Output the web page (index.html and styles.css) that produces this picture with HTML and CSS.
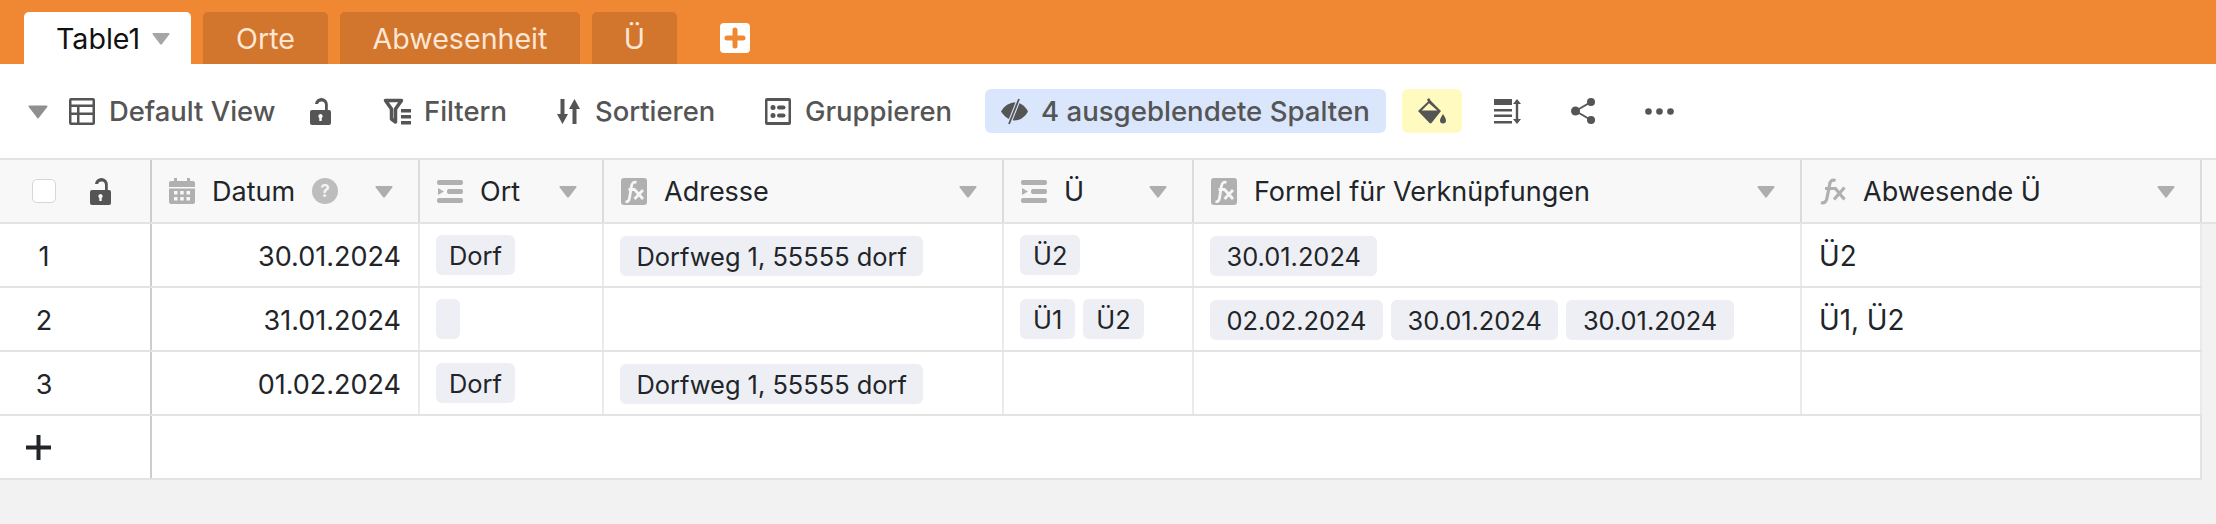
FILE: index.html
```html
<!DOCTYPE html>
<html lang="de">
<head>
<meta charset="utf-8">
<title>Table1</title>
<link rel="stylesheet" href="styles.css">
</head>
<body>
<svg class="defs" width="0" height="0" aria-hidden="true">
  <defs>
    <symbol id="tri" viewBox="0 0 18 13"><path d="M1.5 1h15a1 1 0 0 1 .8 1.5L10 12a1.2 1.2 0 0 1-2 0L.7 2.5A1 1 0 0 1 1.5 1z"/></symbol>
    <symbol id="lock" viewBox="0 0 21 27"><path fill-rule="evenodd" d="M2 12h13V7a3.6 3.6 0 0 0-7 -1H5a6.4 6.4 0 0 1 12.800 1v5H19a2 2 0 0 1 2 2v11a2 2 0 0 1-2 2H2a2 2 0 0 1-2-2V14a2 2 0 0 1 2-2zM10.500 16a2.200 2.200 0 0 0-1.200 4v3h2.400v-3a2.200 2.200 0 0 0-1.200-4z"/></symbol>
    <symbol id="link" viewBox="0 0 26 23"><path d="M2 0h22a2 2 0 0 1 2 2v1a2 2 0 0 1-2 2H2a2 2 0 0 1-2-2V2a2 2 0 0 1 2-2zM2 18h22a2 2 0 0 1 2 2v1a2 2 0 0 1-2 2H2a2 2 0 0 1-2-2v-1a2 2 0 0 1 2-2zM12 9h12a2 2 0 0 1 2 2v1a2 2 0 0 1-2 2H12a2 2 0 0 1-2-2v-1a2 2 0 0 1 2-2zM1 8l6 3.500L1 15z"/></symbol>
    <symbol id="fx" viewBox="0 0 26 27"><rect width="26" height="27" rx="3" fill="#b0b0b0"/><path d="M15.500 4.500C12.500 3.500 11 5 10.500 8L8.500 20C8 23 6.500 24 4.500 23.500M7.500 11.500h7M14 12l8 9M22 12l-8.500 9" fill="none" stroke="#f6f6f6" stroke-width="2.800"/></symbol>
  </defs>
</svg>

<div class="app">
  <nav class="tabs">
    <div class="tab tab-active">Table1<svg class="tab-tri"><use href="#tri"/></svg></div>
    <div class="tab tab-orte">Orte</div>
    <div class="tab tab-abw">Abwesenheit</div>
    <div class="tab tab-ue">Ü</div>
    <div class="tab-add"><svg viewBox="0 0 30 30" width="30" height="30"><rect width="30" height="30" rx="4" fill="#fff"/><path d="M15 7v16M7 15h16" stroke="#f08733" stroke-width="5" stroke-linecap="round"/></svg></div>
  </nav>

  <div class="toolbar">
    <svg class="tb-tri"><use href="#tri"/></svg>
    <svg class="ico ico-view" viewBox="0 0 26 27"><path fill-rule="evenodd" d="M2 0h22a2 2 0 0 1 2 2v23a2 2 0 0 1-2 2H2a2 2 0 0 1-2-2V2a2 2 0 0 1 2-2zM2.500 2.500v4h21v-4zM2.500 9v5.500h5.500V9zm8 0v5.500h13V9zM2.500 17v7.500h5.500V17zm8 0v7.500h13V17z"/></svg>
    <span class="tb-label tb-view">Default View</span>
    <svg class="ico ico-lock"><use href="#lock"/></svg>
    <svg class="ico ico-filter" viewBox="0 0 28 27"><path fill="none" stroke="currentColor" stroke-width="3.500" stroke-linejoin="round" d="M2.500 2.500h16l-6 8.500v13l-4-3V11z"/><path d="M18 11h10v3.500H18zM18 17h10v3.500H18zM18 23h10v3.500H18z"/></svg>
    <span class="tb-label tb-filter">Filtern</span>
    <svg class="ico ico-sort" viewBox="0 0 23 27"><path d="M3.500 1h4v15H11L5.500 26 0 16h3.500zM15.500 26h4V11H23L17.500 1 12 11h3.500z"/></svg>
    <span class="tb-label tb-sort">Sortieren</span>
    <svg class="ico ico-group" viewBox="0 0 26 27"><path fill-rule="evenodd" d="M2 0h22a2 2 0 0 1 2 2v23a2 2 0 0 1-2 2H2a2 2 0 0 1-2-2V2a2 2 0 0 1 2-2zm.500 3v21h21V3z"/><circle cx="8" cy="9.500" r="2.500"/><circle cx="8" cy="17.500" r="2.500"/><rect x="12" y="7.500" width="8.500" height="4" rx="2"/><rect x="12" y="15.500" width="8.500" height="4" rx="2"/></svg>
    <span class="tb-label tb-group">Gruppieren</span>
    <div class="pill pill-hidden">
      <svg class="ico ico-eye" viewBox="0 0 27 27"><path d="M0 13.500C4 7 9 4.500 14 4.500 20 4.500 24 8 27 13.500 24 19 19 22.500 13.500 22.500 8 22.500 4 19 0 13.500z"/><path d="M8 26 18 1" stroke="#dae6fb" stroke-width="4"/><path d="M8 26 18 1" stroke="currentColor" stroke-width="1.800"/></svg>
      <span class="tb-label tb-hidden">4 ausgeblendete Spalten</span>
    </div>
    <div class="pill pill-paint">
      <svg class="ico ico-paint" viewBox="0 0 28 27"><path fill-rule="evenodd" d="M11 0l2 3 10 10-9.500 12a1.500 1.500 0 0 1-2 0L0 13 10 3.500 9 1.500zM11 5.200 3.800 12.500h15.500z"/><path d="M25 16c1.500 2.500 3 4.500 3 6.500a3 3 0 0 1-6 0c0-2 1.500-4 3-6.500z"/></svg>
    </div>
    <svg class="ico ico-height" viewBox="0 0 27 25"><path d="M0 0h18v6H0zM0 10h18v2.400H0zM0 15.500h18v2.400H0zM0 22h18v2.400H0zM23 0l4 5h-2.800v15H27l-4 5-4-5h2.800V5H19z"/></svg>
    <svg class="ico ico-share" viewBox="0 0 25 26"><circle cx="4.500" cy="13" r="4.500"/><circle cx="20" cy="4" r="4"/><circle cx="20" cy="22" r="4"/><path d="M4.500 13 20 4M4.500 13 20 22" stroke="currentColor" stroke-width="2"/></svg>
    <svg class="ico ico-dots" viewBox="0 0 29 7"><circle cx="3.500" cy="3.500" r="3.300"/><circle cx="14.500" cy="3.500" r="3.300"/><circle cx="25.500" cy="3.500" r="3.300"/></svg>
  </div>

  <div class="table">
    <div class="row row-head">
      <div class="cell cell-index cell-index-head">
        <span class="checkbox"></span>
        <svg class="ico ico-head-lock"><use href="#lock"/></svg>
      </div>
      <div class="cell head">
        <svg class="hico" viewBox="0 0 26 26"><path fill-rule="evenodd" d="M5 0h3v3h10V0h3v3h3a2 2 0 0 1 2 2v4H0V5a2 2 0 0 1 2-2h3zM0 10.500h26V24a2 2 0 0 1-2 2H2a2 2 0 0 1-2-2zM5 13v3.500h3.500V13zm6.200 0v3.500h3.500V13zm6.300 0v3.500H21V13zM5 19v3.500h3.500V19zm6.200 0v3.500h3.500V19zm6.300 0v3.500H21V19z"/></svg>
        <span>Datum</span>
        <span class="help">?</span>
        <svg class="htri"><use href="#tri"/></svg>
      </div>
      <div class="cell head"><svg class="hico hico-link"><use href="#link"/></svg><span>Ort</span><svg class="htri"><use href="#tri"/></svg></div>
      <div class="cell head"><svg class="hico hico-fx"><use href="#fx"/></svg><span>Adresse</span><svg class="htri"><use href="#tri"/></svg></div>
      <div class="cell head"><svg class="hico hico-link"><use href="#link"/></svg><span>Ü</span><svg class="htri"><use href="#tri"/></svg></div>
      <div class="cell head"><svg class="hico hico-fx"><use href="#fx"/></svg><span>Formel für Verknüpfungen</span><svg class="htri"><use href="#tri"/></svg></div>
      <div class="cell head"><svg class="hico hico-plain" viewBox="0 0 27 27"><path d="M16.500 2.500C13 1.200 11 3 10.500 7L8 20C7.500 24 5 25.500 2 24.500M6 10.500h9.500M15.500 9.500l10 12M25.500 9.500l-10.500 12" fill="none" stroke="currentColor" stroke-width="3.200"/></svg><span>Abwesende Ü</span><svg class="htri"><use href="#tri"/></svg></div>
    </div>

    <div class="row">
      <div class="cell cell-index">1</div>
      <div class="cell cell-date">30.01.2024</div>
      <div class="cell cell-chips"><span class="chip">Dorf</span></div>
      <div class="cell cell-chips"><span class="chip chip-f">Dorfweg 1, 55555 dorf</span></div>
      <div class="cell cell-chips"><span class="chip">Ü2</span></div>
      <div class="cell cell-chips"><span class="chip chip-f">30.01.2024</span></div>
      <div class="cell cell-text">Ü2</div>
    </div>
    <div class="row">
      <div class="cell cell-index">2</div>
      <div class="cell cell-date">31.01.2024</div>
      <div class="cell cell-chips"><span class="chip chip-empty"></span></div>
      <div class="cell cell-chips"></div>
      <div class="cell cell-chips"><span class="chip">Ü1</span><span class="chip">Ü2</span></div>
      <div class="cell cell-chips"><span class="chip chip-f">02.02.2024</span><span class="chip chip-f">30.01.2024</span><span class="chip chip-f">30.01.2024</span></div>
      <div class="cell cell-text">Ü1, Ü2</div>
    </div>
    <div class="row">
      <div class="cell cell-index">3</div>
      <div class="cell cell-date">01.02.2024</div>
      <div class="cell cell-chips"><span class="chip">Dorf</span></div>
      <div class="cell cell-chips"><span class="chip chip-f">Dorfweg 1, 55555 dorf</span></div>
      <div class="cell cell-chips"></div>
      <div class="cell cell-chips"></div>
      <div class="cell cell-text"></div>
    </div>
    <div class="row row-add">
      <div class="cell cell-index cell-plus"><svg viewBox="0 0 25 25" width="25" height="25"><path d="M12.500 0v25M0 12.500h25" stroke="#212529" stroke-width="4"/></svg></div>
      <div class="cell cell-add-rest"></div>
    </div>
  </div>
</div>
</body>
</html>
```

FILE: styles.css
```css
* { box-sizing: border-box; }
html, body { margin: 0; padding: 0; }
body {
  width: 2216px;
  height: 524px;
  overflow: hidden;
  font-family: Inter, "Liberation Sans", sans-serif;
  color: #212529;
  background: #f2f2f2;
}
.defs { position: absolute; }
svg { display: block; flex: none; fill: currentColor; }

.app { display: flex; flex-direction: column; height: 524px; }

/* tabs */
.tabs {
  height: 64px;
  background: #f08733;
  display: flex;
  align-items: flex-end;
  padding-left: 24px;
  gap: 12px;
}
.tab {
  height: 52px;
  border-radius: 5px 5px 0 0;
  background: #d2752d;
  color: #fde6d3;
  font-size: 28.600px;
  display: flex;
  align-items: center;
  justify-content: center;
  padding-bottom: 0;
}
.tab-active { width: 167px; background: #fff; color: #111; justify-content: flex-start; padding-left: 32px; }
.tab-tri { width: 18px; height: 13px; margin-left: 12px; color: #a6a6a6; }
.tab-orte { width: 125px; }
.tab-abw { width: 240px; }
.tab-ue { width: 85px; }
.tab-add { margin-left: 31px; align-self: flex-start; margin-top: 23px; }

/* toolbar */
.toolbar {
  height: 94px;
  background: #fff;
  display: flex;
  align-items: center;
  padding-left: 28px;
  color: #555;
}
.ico { color: #555; }
.tb-label { font-size: 27.400px; font-weight: 500; color: #555; white-space: nowrap; }
.tb-hidden { font-size: 27.600px; }
.tb-tri { width: 20px; height: 15px; color: #8f8f8f; margin-right: 21px; }
.ico-view { width: 26px; height: 27px; margin-right: 14px; }
.tb-view { width: 165px; margin-right: 36px; }
.ico-lock { width: 21px; height: 27px; margin-right: 52px; }
.ico-filter { width: 28px; height: 27px; margin-right: 13px; }
.tb-filter { width: 82px; margin-right: 51px; }
.ico-sort { width: 23px; height: 27px; margin-right: 15px; }
.tb-sort { width: 121px; margin-right: 49px; }
.ico-group { width: 26px; height: 27px; margin-right: 14px; }
.tb-group { width: 147px; margin-right: 33px; }
.pill { height: 44px; border-radius: 6px; display: flex; align-items: center; }
.pill-hidden { width: 401px; background: #dae6fb; padding-left: 16px; margin-right: 16px; }
.ico-eye { width: 27px; height: 27px; margin-right: 13px; }
.pill-paint { width: 60px; background: #fffac0; justify-content: center; margin-right: 32px; }
.ico-paint { width: 28px; height: 27px; }
.ico-height { width: 27px; height: 25px; margin-right: 50px; }
.ico-share { width: 25px; height: 26px; margin-right: 49px; }
.ico-dots { width: 29px; height: 7px; }

/* table */
.table { flex: none; }
.row {
  display: grid;
  grid-template-columns: 152px 268px 184px 400px 190px 608px 400px;
  width: 2202px;
  height: 64px;
  background: #fff;
  border-bottom: 2px solid #e3e3e3;
}
.row-head { width: 2216px; height: 66px; border-top: 2px solid #e3e3e3; background: #f8f8f8; }
.cell {
  border-right: 2px solid #eaeaea;
  display: flex;
  align-items: center;
  min-width: 0;
  font-size: 27px;
}
.cell-index { border-right-color: #cdcdcd; justify-content: center; padding: 2px 62px 0 0; }
.cell-index-head { justify-content: flex-start; padding: 0 0 0 32px; }
.checkbox {
  width: 24px;
  height: 24px;
  border: 1px solid #d6d6d6;
  border-radius: 5px;
  background: #fff;
  margin-right: 34px;
}
.ico-head-lock { width: 21px; height: 27px; }

.head { padding: 0 25px 0 17px; border-right-color: #dcdcdc; white-space: nowrap; }
.hico { width: 26px; height: 26px; color: #b0b0b0; margin-right: 17px; }
.hico-link { height: 23px; }
.hico-fx { height: 27px; }
.hico-plain { width: 27px; height: 27px; }
.help {
  width: 26px;
  height: 26px;
  border-radius: 50%;
  background: #bdbdbd;
  color: #f4f4f4;
  font-size: 17px;
  font-weight: 700;
  display: flex;
  align-items: center;
  justify-content: center;
  margin-left: 17px;
}
.htri { width: 18px; height: 13px; margin-left: auto; color: #aeaeae; }

.cell-date { justify-content: flex-end; padding: 2px 17px 0 0; }
.cell-chips { padding-left: 16px; gap: 8px; }
.cell-text { padding: 2px 0 0 17px; font-size: 27.800px; }
.chip {
  height: 40px;
  padding: 0 13px;
  border-radius: 6px;
  background: #eeeff4;
  font-size: 25.400px;
  display: flex;
  align-items: center;
  white-space: nowrap;
}
.chip-f { padding: 0 16.500px; margin-top: 2px; }
.chip-empty { width: 24px; padding: 0; }

.row-add { grid-template-columns: 152px 2050px; }
.cell-plus { justify-content: flex-start; padding: 0 0 0 26px; }
.cell-add-rest { border-right-color: #e3e3e3; }
```
